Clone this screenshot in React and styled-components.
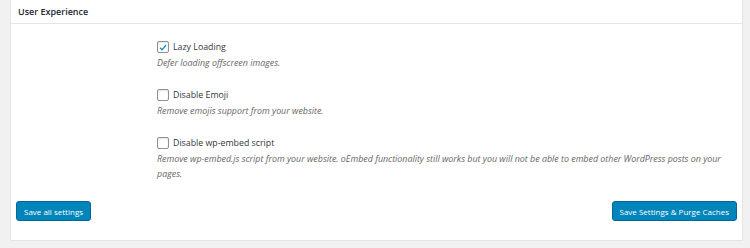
import React, { useState } from 'react'
import styled, { createGlobalStyle } from 'styled-components';

const GlobalStyle = createGlobalStyle`
    body {
        margin: 0;
        background: #f1f1f1;
        font-family: "Open Sans", "Noto Sans", sans-serif;
        color: #23282d;
    }
`;

const Page = styled.div`
    width: 750px;
    height: 248px;
    padding: 0 7px 0 10px;
    box-sizing: border-box;
`;

const Panel = styled.div`
    height: 241px;
    background: #fff;
    border: 1px solid #e2e4e7;
    border-top: none;
    box-sizing: border-box;
    display: flex;
    flex-direction: column;
`;

const Header = styled.h2`
    margin: 0;
    height: 24px;
    padding: 0 7px;
    display: flex;
    align-items: center;
    font-size: 9px;
    font-weight: 600;
    color: #23282d;
    border-bottom: 1px solid #e5e5e5;
    box-sizing: border-box;
`;

const Body = styled.div`
    flex: 1;
    padding: 16px 5px 0 146px;
`;

const Option = styled.div`
    margin-bottom: 18px;
`;

const Label = styled.label`
    display: flex;
    align-items: center;
    gap: 4px;
    height: 14px;
    font-size: 8.8px;
    color: #32373c;
    cursor: pointer;
`;

const Box = styled.span`
    width: 12px;
    height: 12px;
    box-sizing: border-box;
    border: 1px solid #8c8f94;
    border-radius: 2px;
    background: #fff;
    box-shadow: inset 0 1px 2px rgba(0, 0, 0, 0.1);
    display: flex;
    align-items: center;
    justify-content: center;
`;

const Desc = styled.p`
    margin: 1px 0 0;
    font-size: 8.9px;
    line-height: 15px;
    font-style: italic;
    color: #666;
`;

const Footer = styled.div`
    display: flex;
    justify-content: space-between;
    padding: 0 5px 19px;
`;

const Button = styled.button`
    height: 20px;
    padding: 0 7px;
    border: 1px solid #006799;
    border-radius: 3px;
    background: #0085ba;
    color: #fff;
    font-family: inherit;
    font-size: 8px;
    cursor: pointer;
`;

const options = [
    { label: 'Lazy Loading', desc: 'Defer loading offscreen images.', on: true },
    { label: 'Disable Emoji', desc: 'Remove emojis support from your website.', on: false },
    {
        label: 'Disable wp-embed script',
        desc: 'Remove wp-embed.js script from your website. oEmbed functionality still works but you will not be able to embed other WordPress posts on your pages.',
        on: false
    }
];

const Check = ({ on }) => (
    <Box>
        {on && (
            <svg width="11" height="11" viewBox="0 0 20 20">
                <path d="M4 10.5l4 4 8-9" fill="none" stroke="#1e8cbe" strokeWidth="2.6" />
            </svg>
        )}
    </Box>
);

const App = () => {
    const [state, setState] = useState(options.map(o => o.on));

    const toggle = (i) => setState(s => s.map((v, j) => (j === i ? !v : v)));

    return (
        <>
            <GlobalStyle />
            <Page>
                <Panel>
                    <Header>User Experience</Header>
                    <Body>
                        {options.map((o, i) => (
                            <Option key={o.label}>
                                <Label onClick={() => toggle(i)}>
                                    <Check on={state[i]} />
                                    {o.label}
                                </Label>
                                <Desc>{o.desc}</Desc>
                            </Option>
                        ))}
                    </Body>
                    <Footer>
                        <Button>Save all settings</Button>
                        <Button>Save Settings &amp; Purge Caches</Button>
                    </Footer>
                </Panel>
            </Page>
        </>
    )
}

export default App
